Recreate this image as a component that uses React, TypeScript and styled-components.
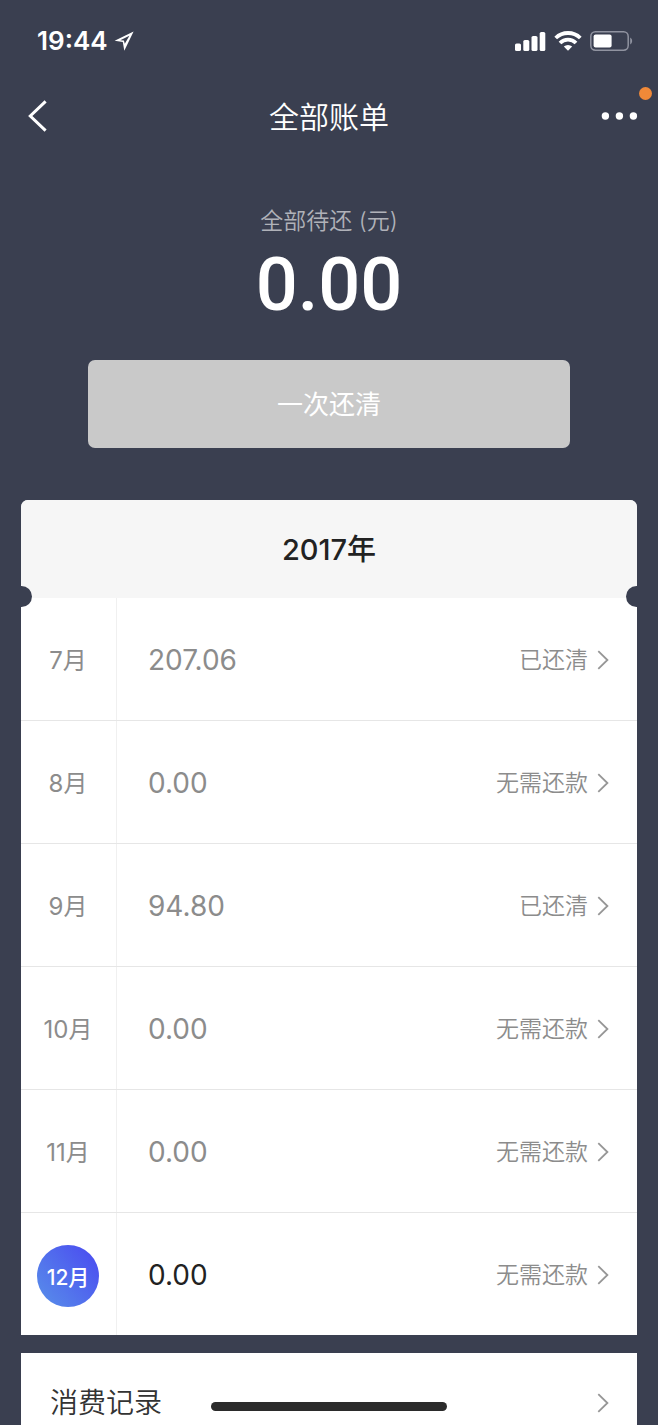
import React from 'react';
import styled, { createGlobalStyle } from 'styled-components';

const NAVY = '#3a3f50';

const GlobalStyle = createGlobalStyle`
  *, *::before, *::after { box-sizing: border-box; }
  body {
    margin: 0;
    background: ${NAVY};
    font-family: Inter, "Noto Sans CJK SC", sans-serif;
    color: #222;
  }
  button { font: inherit; color: inherit; border: 0; background: none; padding: 0; }
  a { color: inherit; text-decoration: none; }
  svg { display: block; }
`;

const Page = styled.div`
  display: flex;
  flex-direction: column;
  min-height: 100vh;
`;

const StatusBar = styled.div`
  display: flex;
  align-items: center;
  justify-content: space-between;
  height: 80px;
  padding: 2px 25px 0 37px;
  color: #fff;
`;

const StatusGroup = styled.div<{ $gap: number }>`
  display: flex;
  align-items: center;
  gap: ${(p) => p.$gap}px;
`;

const Clock = styled.span`
  font-size: 26px;
  line-height: 32px;
  font-weight: 600;
`;

const NavBar = styled.header`
  display: grid;
  grid-template-columns: 1fr auto 1fr;
  align-items: center;
  height: 72px;
  padding: 0 20px 0 28px;
  color: #fff;
`;

const NavTitle = styled.h1`
  margin: 0;
  font-size: 30px;
  line-height: 44px;
  font-weight: 350;
  padding: 2px 8px 0 0;
`;

const NavButton = styled.button<{ $end?: boolean }>`
  position: relative;
  justify-self: ${(p) => (p.$end ? 'end' : 'start')};
`;

const AlertDot = styled.span`
  position: absolute;
  right: -14px;
  bottom: 20px;
  width: 13px;
  height: 13px;
  border-radius: 50%;
  background: #f08938;
`;

const Summary = styled.section`
  display: flex;
  flex-direction: column;
  align-items: center;
  padding: 51px 88px 52px;
  color: #fff;
`;

const SummaryLabel = styled.div`
  font-size: 23px;
  line-height: 36px;
  font-weight: 350;
  color: #b0b2b9;
`;

const SummaryAmount = styled.div`
  margin: 4px 0 33px;
  font-family: Roboto, "Liberation Sans", sans-serif;
  font-size: 74px;
  line-height: 84px;
  font-weight: 500;
`;

const PayButton = styled.button`
  width: 100%;
  height: 88px;
  padding-top: 2px;
  border-radius: 7px;
  background: #c9c9c9;
  color: #fff;
  font-size: 26px;
  line-height: 36px;
  font-weight: 400;
`;

const Card = styled.section<{ $fill?: boolean }>`
  margin: 0 21px;
  background: #fff;
  border-radius: ${(p) => (p.$fill ? '0' : '7px 7px 0 0')};
  flex: ${(p) => (p.$fill ? '1 0 auto' : '0 0 auto')};
  margin-top: ${(p) => (p.$fill ? '18px' : '0')};
`;

const YearHeader = styled.h2`
  position: relative;
  display: flex;
  align-items: center;
  justify-content: center;
  height: 98px;
  margin: 0;
  padding-top: 2px;
  border-radius: 7px 7px 0 0;
  background: #f6f6f6;
  font-size: 29px;
  line-height: 40px;
  font-weight: 500;
`;

const Notch = styled.span<{ $side: 'left' | 'right' }>`
  position: absolute;
  bottom: -9px;
  ${(p) => p.$side}: 0;
  width: 11px;
  height: 21px;
  background: ${NAVY};
  border-radius: ${(p) => (p.$side === 'left' ? '0 11px 11px 0' : '11px 0 0 11px')};
`;

const BillList = styled.ul`
  list-style: none;
  margin: 0;
  padding: 0;
`;

const BillItem = styled.li`
  & + & { border-top: 1px solid #e6e6e6; }
`;

const BillLink = styled.a`
  display: flex;
  height: 122px;
`;

const MonthCell = styled.div`
  display: flex;
  align-items: center;
  justify-content: center;
  width: 96px;
  padding: 3px 1px 0 0;
  border-right: 1px solid #f0f0f0;
  color: #8c8c8c;
`;

const Month = styled.span`
  font-size: 24px;
  line-height: 36px;
  font-weight: 400;
`;

const CurrentMonth = styled.span`
  display: flex;
  align-items: center;
  justify-content: center;
  width: 62px;
  height: 62px;
  border-radius: 50%;
  background: linear-gradient(50deg, #5789ea 10%, #4b4ff0 90%);
  color: #fff;
  font-size: 21px;
  font-weight: 500;
`;

const BillBody = styled.div`
  display: flex;
  flex: 1;
  align-items: center;
  gap: 9px;
  padding: 1px 28px 0 31px;
`;

const Amount = styled.span<{ $current?: boolean }>`
  flex: 1;
  font-size: 28px;
  line-height: 36px;
  font-weight: 400;
  color: ${(p) => (p.$current ? '#222' : '#8c8c8c')};
`;

const BillStatus = styled.span`
  font-size: 23px;
  line-height: 36px;
  font-weight: 350;
  color: #8c8c8c;
`;

const RecordLink = styled.a`
  display: flex;
  align-items: center;
  justify-content: space-between;
  padding: 30px 28px 0 29px;
  font-size: 28px;
  line-height: 40px;
  font-weight: 350;
  color: #333;
`;

const HomeIndicator = styled.div`
  position: fixed;
  left: 50%;
  bottom: 14px;
  width: 236px;
  height: 9px;
  margin-left: -118px;
  border-radius: 5px;
  background: #2b2b2b;
`;

const Chevron = () => (
  <svg width="12" height="20" viewBox="0 0 12 20" fill="none" stroke="#969696" strokeWidth="1.8" aria-hidden="true">
    <path d="M1.3 1.2 10.4 10 1.3 18.8" />
  </svg>
);

const LocationIcon = () => (
  <svg width="20" height="20" viewBox="0 0 20 20" aria-hidden="true">
    <path fill="#fff" fillRule="evenodd" d="M19.6.4.6 9.8l8.2 1.2 1.5 8.8ZM15.4 4.8l-4.6 8-.9-3.2-3.6-.4Z" />
  </svg>
);

const SignalIcon = () => (
  <svg width="31" height="20" viewBox="0 0 31 20" fill="#fff" aria-hidden="true">
    <rect x="0" y="12.5" width="6" height="7.5" rx="1.6" />
    <rect x="8.3" y="9" width="6" height="11" rx="1.6" />
    <rect x="16.5" y="5" width="6" height="15" rx="1.6" />
    <rect x="24.7" y="1" width="5.6" height="19" rx="1.6" />
  </svg>
);

const WifiIcon = () => (
  <svg width="28" height="20" viewBox="0 0 28 20" aria-hidden="true">
    <g fill="none" stroke="#fff" strokeWidth="3.8">
      <path d="M1.7 7a17.6 17.6 0 0 1 24.6 0" />
      <path d="M6 12a11.3 11.3 0 0 1 16 0" />
    </g>
    <path fill="#fff" d="M9.8 15.6a6.2 6.2 0 0 1 8.4 0L14 19.8Z" />
  </svg>
);

const BatteryIcon = () => (
  <svg width="43" height="20" viewBox="0 0 43 20" aria-hidden="true">
    <rect x=".8" y=".8" width="37.4" height="18.4" rx="4.6" fill="none" stroke="#9093a0" strokeWidth="1.5" />
    <rect x="3.6" y="3.6" width="18" height="13" rx="2" fill="#fff" />
    <path d="M40.2 6.5c2.6 1.4 2.6 5.6 0 7Z" fill="#9093a0" />
  </svg>
);

const bills = [
  { month: '7月', amount: '207.06', status: '已还清' },
  { month: '8月', amount: '0.00', status: '无需还款' },
  { month: '9月', amount: '94.80', status: '已还清' },
  { month: '10月', amount: '0.00', status: '无需还款' },
  { month: '11月', amount: '0.00', status: '无需还款' },
  { month: '12月', amount: '0.00', status: '无需还款', current: true },
];

export default function App() {
  return (
    <Page lang="zh-CN">
      <GlobalStyle />
      <StatusBar>
        <StatusGroup $gap={6}>
          <Clock>19:44</Clock>
          <LocationIcon />
        </StatusGroup>
        <StatusGroup $gap={8}>
          <SignalIcon />
          <WifiIcon />
          <BatteryIcon />
        </StatusGroup>
      </StatusBar>
      <NavBar>
        <NavButton type="button" aria-label="返回">
          <svg width="20" height="32" viewBox="0 0 20 32" fill="none" stroke="#fff" strokeWidth="3" aria-hidden="true">
            <path d="M17.6 1.4 2.3 16l15.3 14.6" />
          </svg>
        </NavButton>
        <NavTitle>全部账单</NavTitle>
        <NavButton type="button" aria-label="更多" $end>
          <svg width="37" height="8" viewBox="0 0 37 8" fill="#fff" aria-hidden="true">
            <circle cx="4.4" cy="4" r="3.7" />
            <circle cx="18.4" cy="4" r="3.7" />
            <circle cx="32.4" cy="4" r="3.7" />
          </svg>
          <AlertDot />
        </NavButton>
      </NavBar>
      <Summary>
        <SummaryLabel>全部待还 (元)</SummaryLabel>
        <SummaryAmount>0.00</SummaryAmount>
        <PayButton type="button">一次还清</PayButton>
      </Summary>
      <Card>
        <YearHeader>
          2017年
          <Notch $side="left" />
          <Notch $side="right" />
        </YearHeader>
        <BillList>
          {bills.map((bill) => (
            <BillItem key={bill.month}>
              <BillLink href="#">
                <MonthCell>
                  {bill.current ? <CurrentMonth>{bill.month}</CurrentMonth> : <Month>{bill.month}</Month>}
                </MonthCell>
                <BillBody>
                  <Amount $current={bill.current}>{bill.amount}</Amount>
                  <BillStatus>{bill.status}</BillStatus>
                  <Chevron />
                </BillBody>
              </BillLink>
            </BillItem>
          ))}
        </BillList>
      </Card>
      <Card $fill>
        <RecordLink href="#">
          消费记录
          <Chevron />
        </RecordLink>
      </Card>
      <HomeIndicator />
    </Page>
  );
}
